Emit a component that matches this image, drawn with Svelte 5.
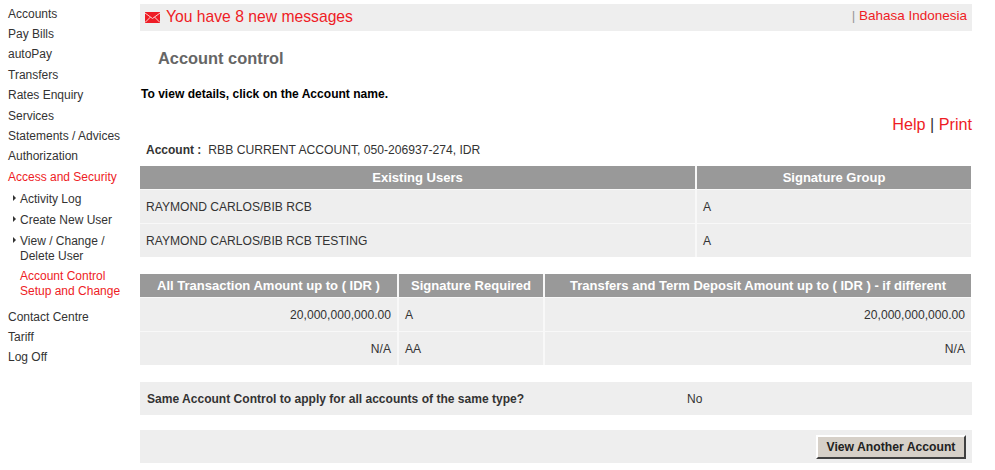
<script>
	const topNav = ['Accounts', 'Pay Bills', 'autoPay', 'Transfers', 'Rates Enquiry', 'Services', 'Statements / Advices', 'Authorization'];
	const subNav = ['Activity Log', 'Create New User'];
	const bottomNav = ['Contact Centre', 'Tariff', 'Log Off'];
	const users = ['RAYMOND CARLOS/BIB RCB', 'RAYMOND CARLOS/BIB RCB TESTING'];
	const limits = [
		['20,000,000,000.00', 'A', '20,000,000,000.00'],
		['N/A', 'AA', 'N/A']
	];
</script>

<div class="page">
	<nav class="side">
		{#each topNav as item}
			<a href="#top" class="nav">{item}</a>
		{/each}
		<a href="#top" class="nav red">Access and Security</a>
		<div class="sub">
			{#each subNav as item}
				<a href="#top" class="subitem arrow">{item}</a>
			{/each}
			<a href="#top" class="subitem arrow">View / Change /<br />Delete User</a>
			<a href="#top" class="subitem red">Account Control<br />Setup and Change</a>
		</div>
		{#each bottomNav as item}
			<a href="#top" class="nav">{item}</a>
		{/each}
	</nav>

	<main>
		<div class="topbar">
			<div class="msg">
				<svg width="15" height="11" viewBox="0 0 15 11">
					<rect width="15" height="11" fill="#ee1c25" />
					<path d="M0 1 L7.5 6.5 L15 1 M0 10.5 L5.5 5 M15 10.5 L9.5 5" fill="none" stroke="#fbd0d0" stroke-width="1" />
				</svg>
				<span>You have 8 new messages</span>
			</div>
			<div class="lang"><i>|</i> <a href="#top">Bahasa Indonesia</a></div>
		</div>

		<h1>Account control</h1>
		<p class="hint">To view details, click on the Account name.</p>
		<div class="tools"><a href="#top">Help</a> | <a href="#top">Print</a></div>
		<div class="account"><b>Account :</b><span>RBB CURRENT ACCOUNT, 050-206937-274, IDR</span></div>

		<div class="tbl users">
			<div class="th">Existing Users</div>
			<div class="th">Signature Group</div>
			{#each users as u}
				<div class="td">{u}</div>
				<div class="td">A</div>
			{/each}
		</div>

		<div class="tbl limits">
			<div class="th">All Transaction Amount up to ( IDR )</div>
			<div class="th">Signature Required</div>
			<div class="th">Transfers and Term Deposit Amount up to ( IDR ) - if different</div>
			{#each limits as row}
				<div class="td num">{row[0]}</div>
				<div class="td">{row[1]}</div>
				<div class="td num">{row[2]}</div>
			{/each}
		</div>

		<div class="same">
			<b>Same Account Control to apply for all accounts of the same type?</b>
			<span>No</span>
		</div>

		<div class="actions">
			<button>View Another Account</button>
		</div>
	</main>
</div>

<style>
	:global(body) {
		margin: 0;
		background: #fff;
	}
	.page {
		display: flex;
		width: 995px;
		height: 470px;
		overflow: hidden;
		font-family: "Liberation Sans", Arial, sans-serif;
		font-size: 12px;
		color: #333;
	}
	a {
		color: inherit;
		text-decoration: none;
	}
	.side {
		width: 140px;
		flex: none;
		padding-top: 3.6px;
		box-sizing: border-box;
	}
	.nav {
		display: block;
		height: 20.4px;
		line-height: 20.4px;
		padding-left: 8px;
	}
	.sub {
		padding: 1.4px 0 3px 20px;
	}
	.subitem {
		display: block;
		position: relative;
		line-height: 15px;
		padding: 3px 0;
	}
	.subitem:last-child {
		padding-bottom: 5px;
		margin-top: -1px;
	}
	.arrow::before {
		content: "";
		position: absolute;
		left: -7px;
		top: 6px;
		border-left: 3px solid #333;
		border-top: 3px solid transparent;
		border-bottom: 3px solid transparent;
	}
	.red {
		color: #ee1c25;
	}
	main {
		width: 832px;
		flex: none;
		padding-top: 4px;
	}
	.topbar {
		height: 27px;
		background: #eee;
		display: flex;
		justify-content: space-between;
		align-items: center;
		padding: 0 5px;
	}
	.msg {
		display: flex;
		align-items: center;
		gap: 6px;
		font-size: 15.7px;
		color: #ee1c25;
		margin-top: -1px;
	}
	.lang {
		font-size: 13.5px;
		color: #ee1c25;
		margin-top: -5px;
	}
	.lang i {
		font-style: normal;
		color: #999;
	}
	h1 {
		margin: 17px 0 0 18px;
		font-size: 16.4px;
		line-height: 20px;
		font-weight: bold;
		color: #666;
	}
	.hint {
		margin: 18px 0 0 1px;
		font-size: 12.05px;
		line-height: 16px;
		font-weight: bold;
		color: #000;
	}
	.tools {
		margin-top: 12px;
		text-align: right;
		font-size: 16.2px;
		line-height: 20px;
		color: #333;
	}
	.tools a {
		color: #ee1c25;
	}
	.account {
		display: flex;
		gap: 7px;
		margin: 8px 0 0 6px;
		line-height: 16px;
	}
	.account span {
		font-size: 12.13px;
	}
	.tbl {
		display: grid;
		column-gap: 2px;
		row-gap: 1px;
		width: 831px;
		background: #f8f8f8;
	}
	.users {
		margin-top: 8px;
		grid-template-columns: 555px 274px;
	}
	.limits {
		margin-top: 17px;
		grid-template-columns: 257px 144px 426px;
	}
	.th {
		background: #999;
		color: #fff;
		font-weight: bold;
		font-size: 13.02px;
		height: 23px;
		line-height: 23px;
		text-align: center;
		white-space: nowrap;
	}
	.td {
		background: #eee;
		height: 33px;
		box-sizing: border-box;
		padding: 1px 6px 0;
		line-height: 32px;
		font-size: 12.1px;
	}
	.users .td {
		padding-top: 2px;
		line-height: 31px;
	}
	.num {
		text-align: right;
	}
	.same {
		margin-top: 17px;
		height: 33px;
		background: #eee;
		display: flex;
		align-items: center;
		padding-left: 7px;
	}
	.same b {
		width: 540px;
		font-size: 12.05px;
	}
	.actions {
		margin-top: 15px;
		height: 33px;
		background: #eee;
		display: flex;
		align-items: center;
		justify-content: flex-end;
		padding-right: 6px;
	}
	button {
		height: 24px;
		width: 150px;
		padding: 0;
		box-sizing: border-box;
		background: #d6d0c8;
		border: 2px solid;
		border-color: #fff #404040 #404040 #fff;
		font-family: inherit;
		font-size: 12.2px;
		font-weight: bold;
		color: #222;
	}
</style>
